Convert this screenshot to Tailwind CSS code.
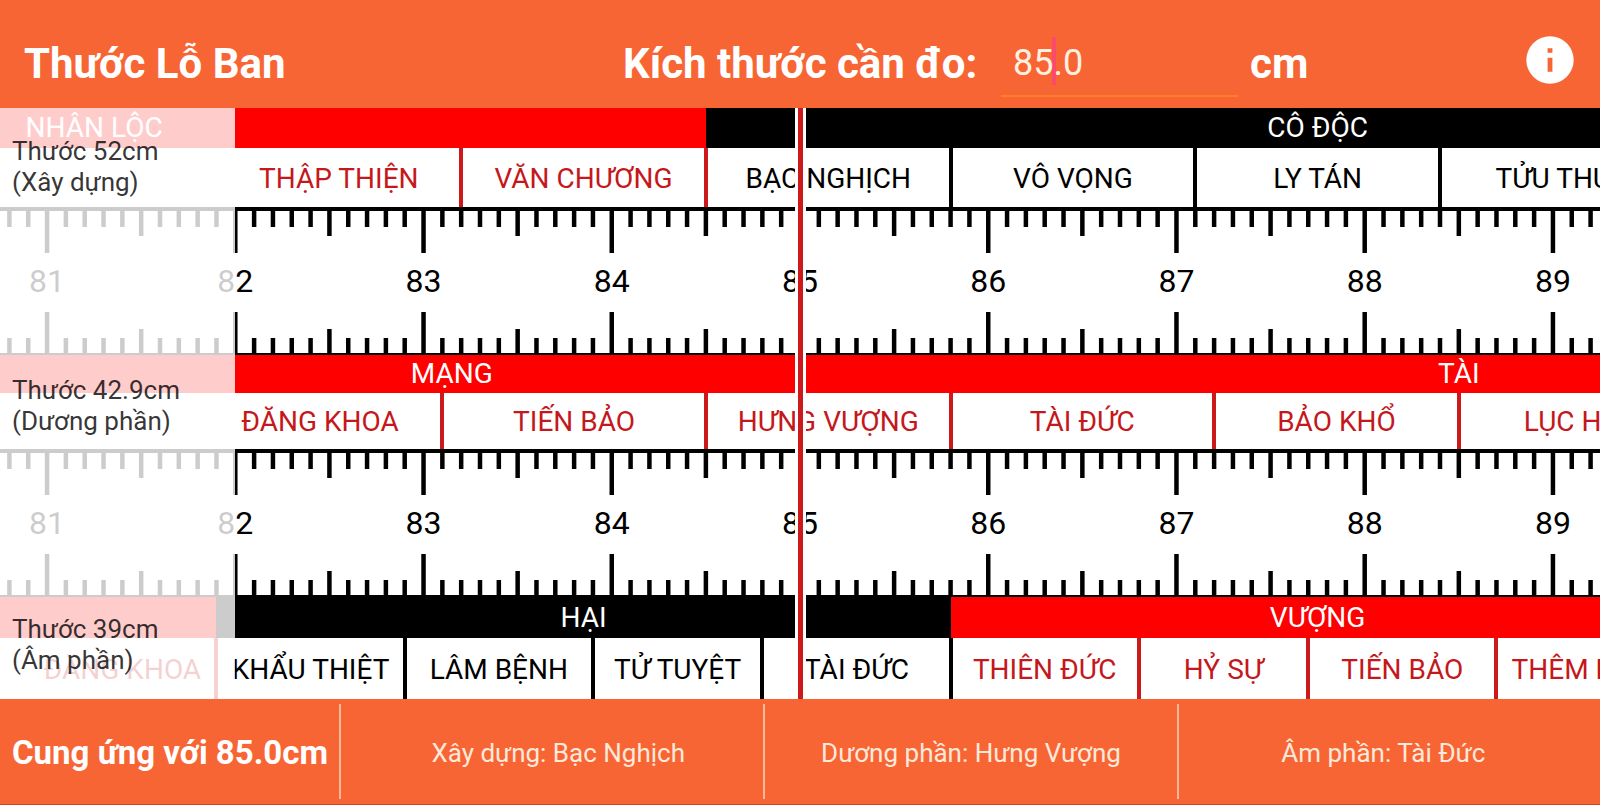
<!DOCTYPE html>
<html lang="vi">
<head>
<meta charset="utf-8">
<meta name="viewport" content="width=device-width, initial-scale=1">
<title>Thước Lỗ Ban</title>
<script src="https://cdn.jsdelivr.net/npm/@tailwindcss/browser@4"></script>
</head>
<body class="flex min-h-screen flex-col overflow-x-hidden bg-white font-['Roboto','Noto_Sans',sans-serif] text-black">

<header class="flex h-[108px] shrink-0 items-center bg-[#f86534] pt-5 pr-[26px] pl-6 text-white">
  <h1 class="w-[599px] shrink-0 text-[42px] leading-[52px] font-bold whitespace-nowrap">Thước Lỗ Ban</h1>
  <label for="size" class="w-[378px] shrink-0 text-[42px] leading-[52px] font-bold whitespace-nowrap">Kích thước cần đo:</label>
  <div class="relative w-[237px] shrink-0">
    <span class="absolute top-1.5 left-[51px] h-12 w-1 bg-[#fb4a6c]"></span>
    <input id="size" type="text" inputmode="decimal" value="85.0" class="relative block h-[66px] w-full border-b-2 border-[#fd7f28] bg-transparent px-3 text-[36px] text-[#fff0e0] outline-none">
  </div>
  <span class="ml-3 text-[42px] leading-[52px] font-bold">cm</span>
  <button type="button" aria-label="Thông tin" class="mb-2 ml-auto">
    <svg class="block size-12" viewBox="0 0 48 48"><circle cx="24" cy="24" r="23.7" fill="#fff"/><path d="M21.6 12.2h4.8v4.6h-4.8zM21.6 21.8h4.8v14h-4.8z" fill="#f86534"/></svg>
  </button>
</header>

<main class="relative overflow-hidden">
  <section id="xay-dung" aria-label="Thước 52cm">
    <div data-band class="flex h-10 overflow-hidden"></div>
    <div data-cells class="flex h-[59px] overflow-hidden"></div>
  </section>
  <div data-ruler class="flex h-[148px] flex-col overflow-hidden border-t-4 border-b-2 border-black"></div>
  <section id="duong-phan" aria-label="Thước 42.9cm">
    <div data-band class="flex h-[38px] overflow-hidden"></div>
    <div data-cells class="flex h-14 overflow-hidden"></div>
  </section>
  <div data-ruler class="flex h-[148px] flex-col overflow-hidden border-t-4 border-b-2 border-black"></div>
  <section id="am-phan" aria-label="Thước 39cm">
    <div data-band class="flex h-[41px] overflow-hidden"></div>
    <div data-cells class="flex h-[61px] overflow-hidden"></div>
  </section>

  <!-- translucent panel with the names of the three rulers -->
  <aside class="absolute inset-y-0 left-0 flex w-[14.7%] flex-col gap-[177px] bg-white/80 pt-7 pl-3 text-[26px] leading-[31px] whitespace-nowrap text-black/80">
    <p>Thước 52cm<br>(Xây dựng)</p>
    <p>Thước 42.9cm<br>(Dương phần)</p>
    <p>Thước 39cm<br>(Âm phần)</p>
  </aside>

  <!-- measuring line -->
  <div class="absolute inset-y-0 left-[calc(50%-5px)] w-[11px] border-x-3 border-white bg-[#cc1a1c]"></div>
</main>

<footer class="grid h-[106px] grow grid-cols-[339px_424fr_413fr_423fr] items-stretch border-b border-[#c9481f] bg-[#f86534] py-[5px] text-center text-[26px] text-[#ffe9da]">
  <p class="flex items-center pt-0.5 pl-3 text-[33px] font-bold whitespace-nowrap text-white">Cung ứng với 85.0cm</p>
  <p class="flex items-center justify-center border-l-2 border-[#fdb79d] pt-[3px] pl-3">Xây dựng: Bạc Nghịch</p>
  <p class="flex items-center justify-center border-l-2 border-[#fdb79d] pt-[3px]">Dương phần: Hưng Vượng</p>
  <p class="flex items-center justify-center border-l-2 border-[#fdb79d] pt-[3px] pr-3">Âm phần: Tài Đức</p>
</footer>

<script>
const VALUE = 85, VISIBLE = 8.5, START = VALUE - VISIBLE / 2;
const pct = cm => (cm / VISIBLE * 100).toFixed(4) + '%';
const RED = 'r', BLACK = 'k';

// Each entry: [end in cm, label, colour]
const rulers = {
  'xay-dung': {
    bandStart: 78, band: [[84.5, 'NHÂN LỘC', RED], [91, 'CÔ ĐỘC', BLACK]],
    cellStart: 81.9, cells: [[83.2, 'THẬP THIỆN', RED], [84.5, 'VĂN CHƯƠNG', RED], [85.8, 'BẠC NGHỊCH', BLACK], [87.1, 'VÔ VỌNG', BLACK], [88.4, 'LY TÁN', BLACK], [89.7, 'TỬU THỤC', BLACK]]
  },
  'duong-phan': {
    bandStart: 80.5, band: [[85.8, 'MẠNG', RED], [91.2, 'TÀI', RED]],
    cellStart: 81.8, cells: [[83.1, 'ĐĂNG KHOA', RED], [84.5, 'TIẾN BẢO', RED], [85.8, 'HƯNG VƯỢNG', RED], [87.2, 'TÀI ĐỨC', RED], [88.5, 'BẢO KHỔ', RED], [89.8, 'LỤC HỢP', RED]]
  },
  'am-phan': {
    bandStart: 80.7, band: [[81.9, '', RED], [85.8, 'HẠI', BLACK], [89.7, 'VƯỢNG', RED]],
    cellStart: 80.9, cells: [[81.9, 'ĐĂNG KHOA', RED], [82.9, 'KHẨU THIỆT', BLACK], [83.9, 'LÂM BỆNH', BLACK], [84.8, 'TỬ TUYỆT', BLACK], [85.8, 'TÀI ĐỨC', BLACK], [86.8, 'THIÊN ĐỨC', RED], [87.7, 'HỶ SỰ', RED], [88.7, 'TIẾN BẢO', RED], [89.7, 'THÊM PHÚC', RED]]
  }
};

function strip(start, items, render) {
  let from = start;
  return items.map((item, i) => {
    const style = `width:${pct(item[0] - from)}` + (i === 0 ? `;margin-left:${pct(start - START)}` : '');
    from = item[0];
    return render(item, style);
  }).join('');
}

for (const [id, r] of Object.entries(rulers)) {
  const el = document.getElementById(id);
  el.querySelector('[data-band]').innerHTML = strip(r.bandStart, r.band, ([, label, c], style) =>
    `<div class="flex shrink-0 items-center justify-center text-[28px] leading-8 text-white ${c === RED ? 'bg-[#ff0000]' : 'bg-black'}" style="${style}">${label}</div>`);
  el.querySelector('[data-cells]').innerHTML = strip(r.cellStart, r.cells, ([, label, c], style) =>
    `<div class="relative flex shrink-0 items-center justify-center pt-0.5 text-[28px] leading-8 whitespace-nowrap ${c === RED ? 'text-[#c4181c]' : 'text-black'}" style="${style}">${label}<span class="absolute inset-y-0 -right-0.5 w-1 ${c === RED ? 'bg-[#cc1a1c]' : 'bg-black'}"></span></div>`);
}

function ticks(height, long, half, short, down) {
  let lines = '';
  for (let mm = 807; mm <= 893; mm++) {
    const len = mm % 10 === 0 ? long : mm % 5 === 0 ? half : short;
    const x = pct(mm / 10 - START);
    lines += `<line x1="${x}" x2="${x}" y1="${down ? 0 : height - len}" y2="${down ? len : height}"/>`;
  }
  return `<svg class="block w-full shrink-0 ${down ? 'h-[42px]' : 'h-[41px]'}" stroke="#000" stroke-width="4.5" aria-hidden="true">${lines}</svg>`;
}

const numbers = Array.from({ length: 9 }, (_, i) => [81.5 + i, 81 + i]);
document.querySelectorAll('[data-ruler]').forEach(el => {
  el.innerHTML = ticks(42, 42, 25, 16, true) +
    `<div class="flex grow items-center pb-1 text-[32px] leading-10">${strip(80.5, numbers, ([, n], style) => `<span class="shrink-0 text-center" style="${style}">${n}</span>`)}</div>` +
    ticks(41, 41, 24, 15, false);
});
</script>
</body>
</html>
